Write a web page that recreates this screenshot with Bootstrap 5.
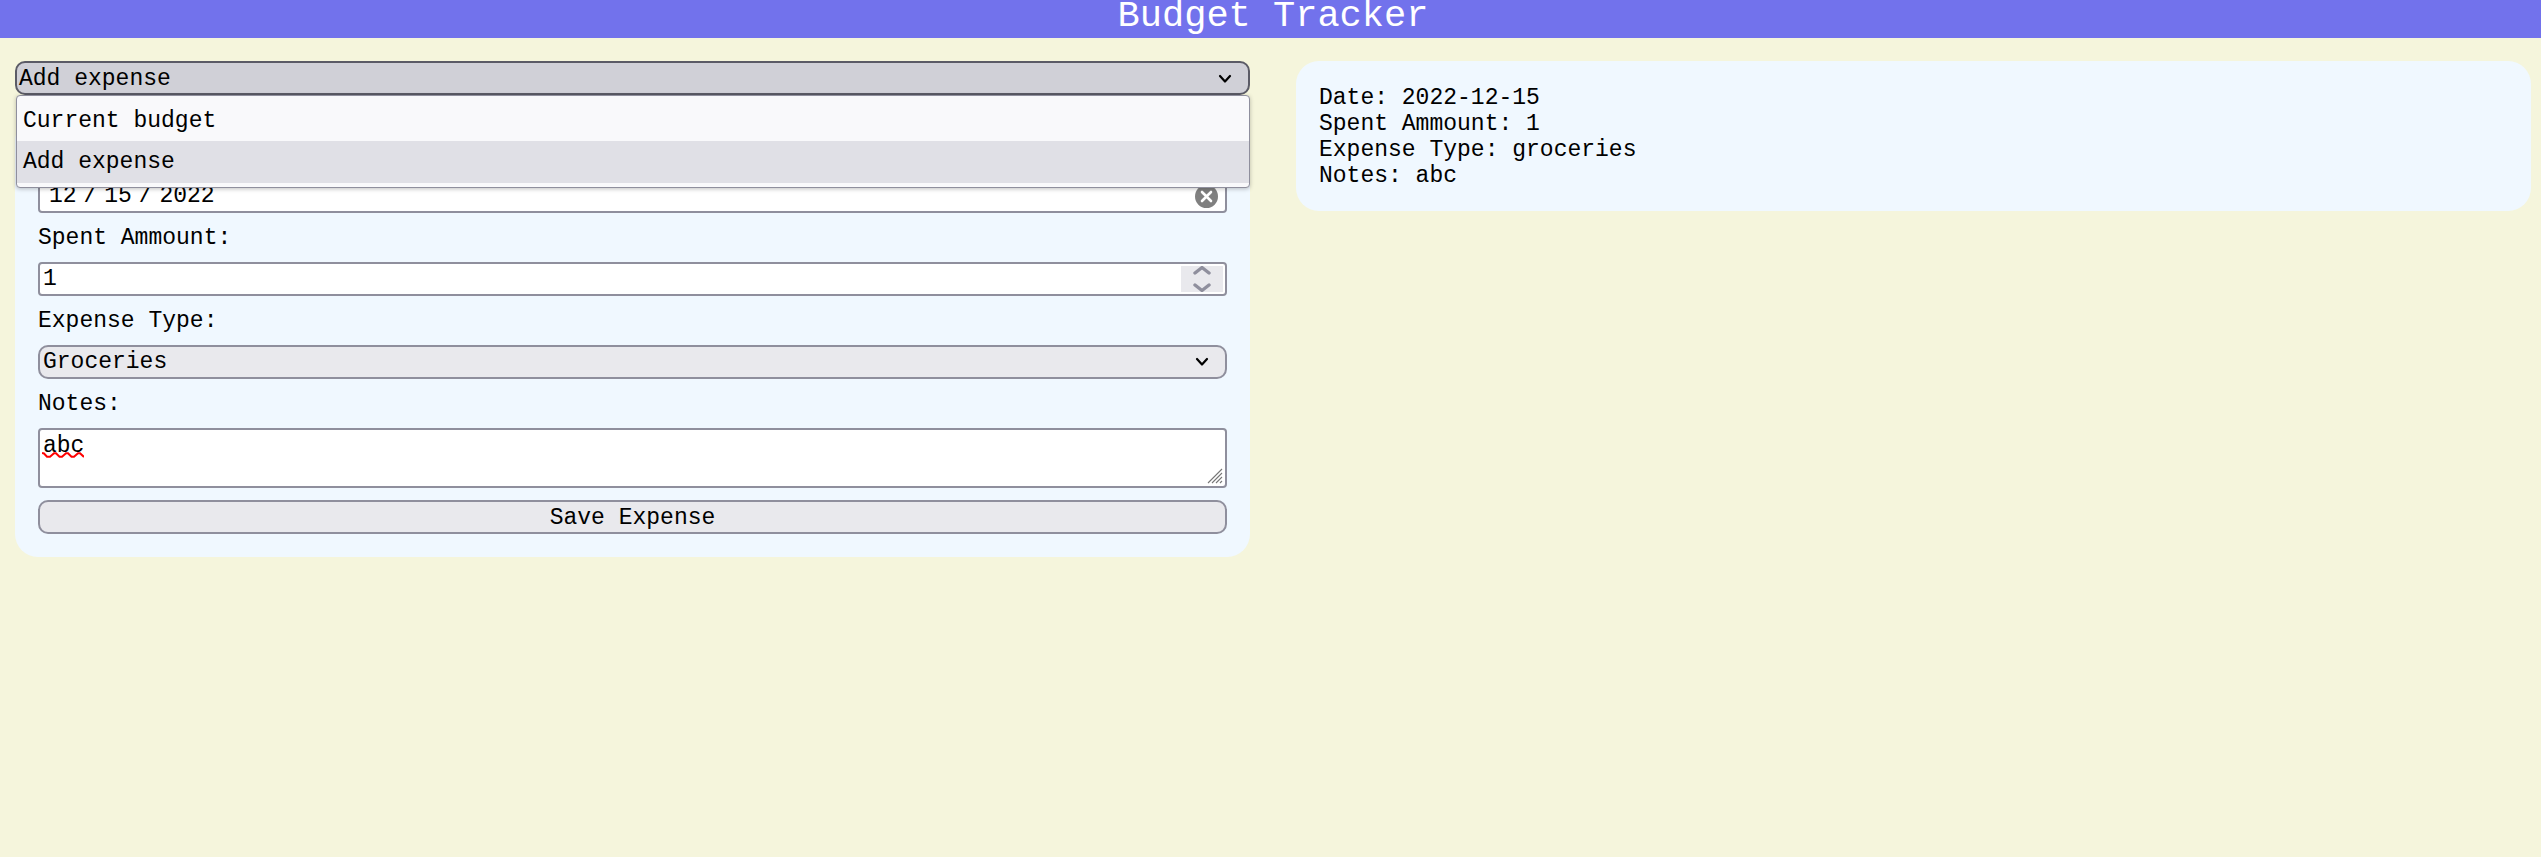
<!DOCTYPE html>
<html lang="en">
<head>
<meta charset="utf-8">
<title>Budget Tracker</title>
<link href="https://cdn.jsdelivr.net/npm/bootstrap@5.3.0/dist/css/bootstrap.min.css" rel="stylesheet">
<style>
  body { background: #f5f5dc; color: #000; font: 23px/26px "Liberation Mono", monospace; }
  .site-header { background: #7272ec; height: 38px; }
  .site-header h1 { font-size: 37px; line-height: 32px; font-weight: 400; margin: 0 0 0 5px; }
  .page-columns { display: grid; grid-template-columns: 1235px 1235px; column-gap: 46px; padding: 23px 10px 0 15px; align-items: start; }
  .panel { background: #f0f8ff; border-radius: 23px; padding: 24px 23px 22px; }
  .form-stack { gap: 11.5px; margin-top: 23px; padding: 23px; }
  .form-stack > span { padding-top: 1px; height: 26px; }
  .field { border: 2px solid #8f8f9d; border-radius: 4px; background: #fff; height: 34px; padding: 1px 3px 0; line-height: 30px; }
  .field > span { height: 30px; }
  .field-button { background: #e9e9ed; border-radius: 10px; }
  .field-open { background: #d0d0d7; border-color: #5b5b66; padding-left: 2px; }
  .caret-icon { margin-right: 13px; }
  .date-text { word-spacing: -6.9px; padding-left: 6px; }
  .clear-icon { margin-right: 4px; }
  .spinner { width: 42px; height: 26px; background: #e9e9ed; margin: -1px -1px 0 0; }
  .notes-field { height: 60px; }
  .squiggle { left: 2px; top: 22px; }
  .grip { right: 2px; bottom: 2px; }
  .save-button { margin-top: .5px; }
  .options { left: 1px; right: 0; top: 34px; height: 93px; z-index: 5; background: #f9f9fb; border: 1px solid #8f8f9d; border-radius: 4px; padding: 3px 0; box-shadow: 0 1px 4px rgba(0,0,0,.25); }
  .options div { height: 42px; line-height: 43px; padding-left: 6px; }
  .options div:first-child { padding-top: 1px; }
  .options .chosen { background: #e0e0e6; }
</style>
</head>
<body>
<header class="site-header text-white text-center"><h1>Budget Tracker</h1></header>
<main class="page-columns">
  <section>
    <div class="position-relative">
      <div class="field field-button field-open d-flex align-items-center justify-content-between">
        <span>Add expense</span>
        <svg class="caret-icon" width="14" height="10" viewBox="0 0 14 10"><path d="M2 2l5 5.500L12 2" fill="none" stroke="#000" stroke-width="2.2" stroke-linecap="round" stroke-linejoin="round"/></svg>
      </div>
      <div class="options position-absolute">
        <div>Current budget</div>
        <div class="chosen">Add expense</div>
      </div>
    </div>
    <form class="panel form-stack d-flex flex-column">
      <span>Date:</span>
      <div class="field d-flex align-items-center justify-content-between">
        <span class="date-text">12 / 15 / 2022</span>
        <svg class="clear-icon" width="23" height="23" viewBox="0 0 23 23"><circle cx="11.5" cy="11.5" r="11.5" fill="#808080"/><path d="M7 7l9 9M16 7l-9 9" stroke="#fff" stroke-width="2.6" stroke-linecap="round"/></svg>
      </div>
      <span>Spent Ammount:</span>
      <div class="field d-flex align-items-center justify-content-between">
        <span>1</span>
        <div class="spinner d-flex justify-content-center">
          <svg width="18" height="26" viewBox="0 0 18 26"><path d="M2 7l7-5.500L16 7M2 19l7 5.500L16 19" fill="none" stroke="#8f8f9d" stroke-width="3.4" stroke-linecap="round" stroke-linejoin="round"/></svg>
        </div>
      </div>
      <span>Expense Type:</span>
      <div class="field field-button d-flex align-items-center justify-content-between">
        <span>Groceries</span>
        <svg class="caret-icon" width="14" height="10" viewBox="0 0 14 10"><path d="M2 2l5 5.500L12 2" fill="none" stroke="#000" stroke-width="2.2" stroke-linecap="round" stroke-linejoin="round"/></svg>
      </div>
      <span>Notes:</span>
      <div class="field notes-field position-relative">
        <span>abc</span>
        <svg class="squiggle position-absolute" width="42" height="6" viewBox="0 0 42 6"><path d="M0 1L2 1.5 5 4.7H8L12 1.2H14L17.5 4.7H20L24 1.2H26L29.5 4.7H32L36 1.2H38L42 5" fill="none" stroke="#f00" stroke-width="2"/></svg>
        <svg class="grip position-absolute" width="16" height="16" viewBox="0 0 16 16"><path d="M1 15L15 1M5 15L15 5M9 15l6-6M13 15l2-2" stroke="#777" stroke-width="1.1"/></svg>
      </div>
      <div class="field field-button save-button text-center" role="button">Save Expense</div>
    </form>
  </section>
  <section class="panel">
    <div>Date: 2022-12-15</div>
    <div>Spent Ammount: 1</div>
    <div>Expense Type: groceries</div>
    <div>Notes: abc</div>
  </section>
</main>
<script src="https://cdn.jsdelivr.net/npm/bootstrap@5.3.0/dist/js/bootstrap.bundle.min.js"></script>
</body>
</html>
